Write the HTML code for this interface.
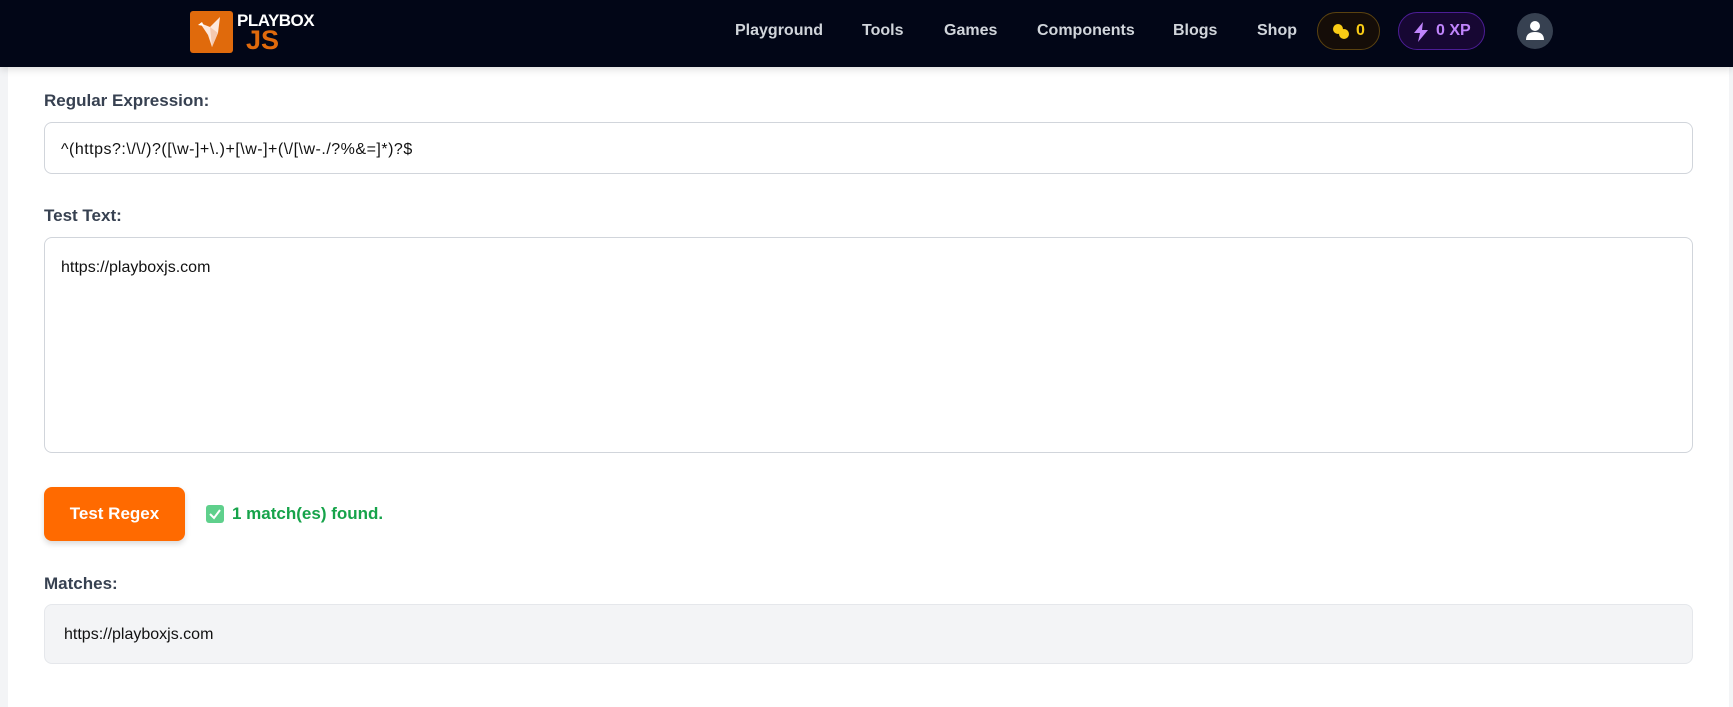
<!DOCTYPE html>
<html><head><meta charset="utf-8"><style>
*{box-sizing:border-box;margin:0;padding:0}
body{width:1733px;height:687px;overflow:hidden;background:#f3f4f6;font-family:"Liberation Sans",sans-serif;position:relative}
.hdr{position:absolute;left:0;top:0;width:1733px;height:67px;background:#020617;z-index:2;box-shadow:0 2px 8px rgba(0,0,0,.15)}
.card{position:absolute;left:8px;top:67px;width:1721px;height:640px;background:#fff}
.nav{position:absolute;top:22px;color:#d1d5db;font-size:16px;font-weight:bold}
.lbl{position:absolute;left:44px;color:#374151;font-size:17px;font-weight:bold}
.box{position:absolute;left:44px;width:1649px;border:1px solid #d1d5db;border-radius:8px;font-size:16px;color:#111}
</style></head><body>
<div class="hdr">
 <div style="position:absolute;left:190px;top:11px;width:43px;height:42px;background:#e06a0c;border-radius:3px">
  <svg width="43" height="42" viewBox="0 0 43 42"><path d="M10 12 L20 16 L30 6 L28 22 L22 36 L18 24 Z" fill="#fde8dc"/><path d="M20 16 L28 22 L22 36Z" fill="#f5c9b0"/><path d="M8 14 L12 11 L14 15Z" fill="#fff"/></svg>
 </div>
 <div style="position:absolute;left:237px;top:11px;color:#fff;font-weight:bold;font-size:17px;letter-spacing:-0.5px">PLAYBOX</div>
 <div style="position:absolute;left:246px;top:27px;color:#e06a0c;font-weight:bold;font-size:27px;line-height:27px">JS</div>
 <div class="nav" style="left:735px">Playground</div>
 <div class="nav" style="left:862px">Tools</div>
 <div class="nav" style="left:944px">Games</div>
 <div class="nav" style="left:1037px">Components</div>
 <div class="nav" style="left:1173px">Blogs</div>
 <div class="nav" style="left:1257px">Shop</div>
 <div style="position:absolute;left:1317px;top:12px;width:63px;height:38px;border:1px solid #5a4210;background:#150d08;border-radius:19px">
  <svg style="position:absolute;left:14px;top:10px" width="18" height="16"><circle cx="6" cy="6" r="5" fill="#facc15"/><circle cx="12" cy="11" r="5" fill="#facc15"/></svg>
  <span style="position:absolute;left:38px;top:9px;color:#facc15;font-weight:bold;font-size:16px">0</span></div>
 <div style="position:absolute;left:1398px;top:12px;width:87px;height:38px;border:1px solid #4c1d95;background:#170733;border-radius:19px">
  <svg style="position:absolute;left:14px;top:9px" width="16" height="20" viewBox="0 0 16 20"><path d="M10 0 L1 11 H7 L5 20 L15 8 H9 Z" fill="#c084fc"/></svg>
  <span style="position:absolute;left:37px;top:9px;color:#c084fc;font-weight:bold;font-size:16px">0 XP</span></div>
 <div style="position:absolute;left:1517px;top:13px;width:36px;height:36px;border-radius:50%;background:#374151">
  <svg width="36" height="36"><circle cx="18" cy="13" r="5" fill="#fff"/><path d="M9 27 Q9 19 18 19 Q27 19 27 27Z" fill="#fff"/></svg></div>
</div>
<div class="card"></div>
<div class="lbl" style="top:91px">Regular Expression:</div>
<div class="box" style="top:122px;height:52px;padding:18px 0 0 16px;letter-spacing:0.5px">^(https?:\/\/)?([\w-]+\.)+[\w-]+(\/[\w-./?%&amp;=]*)?$</div>
<div class="lbl" style="top:206px">Test Text:</div>
<div class="box" style="top:237px;height:216px;padding:21px 0 0 16px">https://playboxjs.com</div>
<div style="position:absolute;left:44px;top:487px;width:141px;height:54px;background:#ff6a00;border-radius:8px;color:#fff;font-weight:bold;font-size:17px;text-align:center;line-height:54px;box-shadow:0 3px 6px rgba(0,0,0,.15)">Test Regex</div>
<svg style="position:absolute;left:206px;top:505px" width="18" height="18"><rect width="18" height="18" rx="3" fill="#5fd08c"/><path d="M4 9 L8 13 L14 5" stroke="#fff" stroke-width="2" fill="none"/></svg>
<div style="position:absolute;left:232px;top:504px;color:#16a34a;font-weight:bold;font-size:17px">1 match(es) found.</div>
<div class="lbl" style="top:574px">Matches:</div>
<div class="box" style="top:604px;height:60px;background:#f3f4f6;border-color:#e5e7eb;padding:21px 0 0 19px">https://playboxjs.com</div>
</body></html>
